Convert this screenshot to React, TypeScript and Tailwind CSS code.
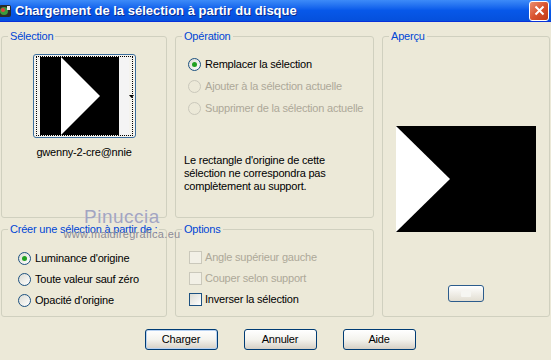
import clsx from "clsx"

interface OptionProps {
  label: string
  checked?: boolean
  disabled?: boolean
  rowClass?: string
}

function Radio({ label, checked, disabled, rowClass }: OptionProps) {
  return (
    <div className={clsx("flex items-center", rowClass)}>
      <span
        className={clsx(
          "flex h-[13px] w-[13px] shrink-0 items-center justify-center rounded-full border",
          disabled
            ? "border-[#CAC8BB] bg-[#ECE9D8]"
            : "border-[#1C5180] bg-linear-to-br from-[#DCDCD4] to-white"
        )}
      >
        {checked && <span className="h-[5px] w-[5px] rounded-full bg-[#21A121]" />}
      </span>
      <span className={clsx("ml-[4px]", disabled ? "text-[#ACA899]" : "text-black")}>
        {label}
      </span>
    </div>
  )
}

function Checkbox({ label, disabled, rowClass }: OptionProps) {
  return (
    <div className={clsx("flex items-center", rowClass)}>
      <span
        className={clsx(
          "h-[13px] w-[13px] shrink-0 border",
          disabled
            ? "border-[#CAC8BB] bg-[#F2F0E6]"
            : "border-[#1C5180] bg-linear-to-br from-[#DCDCD4] to-white"
        )}
      />
      <span className={clsx("ml-[3px]", disabled ? "text-[#ACA899]" : "text-black")}>
        {label}
      </span>
    </div>
  )
}

function GroupBox({
  title,
  className,
  children,
}: {
  title: string
  className?: string
  children?: React.ReactNode
}) {
  return (
    <fieldset className={clsx("min-w-0 rounded-[3px] border border-[#D0D0BF]", className)}>
      <legend className="ml-[6px] whitespace-nowrap px-[2px] leading-[13px] text-[#0046D5]">
        {title}
      </legend>
      {children}
    </fieldset>
  )
}

function XpButton({ label, isDefault }: { label: string; isDefault?: boolean }) {
  return (
    <button
      className={clsx(
        "h-[21px] w-[73px] rounded-[3px] border border-[#003C74] bg-linear-to-b from-white via-[#F4F3EE] to-[#D6D0C5] text-black",
        isDefault && "shadow-[inset_0_0_0_1px_#B8D2F2]"
      )}
    >
      {label}
    </button>
  )
}

export default function App() {
  return (
    <div className="relative h-[360px] w-[551px] overflow-hidden bg-[#ECE9D8] font-['Liberation_Sans',sans-serif] text-[11px] tracking-[-0.2px]">
      {/* title bar */}
      <div className="flex h-[22px] items-center border-b border-[#0831D9] bg-linear-to-b from-[#3D8BF8] via-[#0758E9] to-[#0550DC]">
        <svg width="14" height="14" viewBox="0 0 14 14" className="-ml-[2px] mr-[3px]">
          <rect x="1" y="1" width="12" height="12" rx="2" fill="#2A2A2A" />
          <circle cx="6" cy="7" r="4" fill="#3C9A3C" />
          <circle cx="5" cy="6" r="2" fill="#E04040" />
          <rect x="9" y="2" width="3" height="4" fill="#E8E8E8" />
        </svg>
        <span className="text-[13px] font-bold tracking-[0px] text-white [text-shadow:1px_1px_0_#0A2C8C]">
          Chargement de la sélection à partir du disque
        </span>
        <div className="ml-auto mr-[2px] flex h-[20px] w-[20px] items-center justify-center rounded-[3px] border border-white bg-linear-to-br from-[#E98D6F] via-[#D9532E] to-[#C23A14]">
          <svg width="11" height="11" viewBox="0 0 11 11">
            <path d="M1.5 1.5 L9.5 9.5 M9.5 1.5 L1.5 9.5" stroke="white" strokeWidth="2" />
          </svg>
        </div>
      </div>

      <div className="pt-[8px] pl-[1px]">
        <div className="grid grid-cols-[166px_199px_168px] grid-rows-[188px_94px] gap-x-[8px] gap-y-[5px]">
          <GroupBox title="Sélection">
            <div className="mx-auto mt-[11px] w-[103px] rounded-[3px] border border-[#3C6E9C] bg-[#F4F3EE] px-[2px] py-[1px]">
              <div className="relative border border-dotted border-black px-[3px] py-0">
                <svg width="89" height="78" viewBox="0 0 89 78" className="block">
                  <rect x="0" y="0" width="79" height="78" fill="black" />
                  <rect x="79" y="0" width="10" height="78" fill="#F4F4F4" />
                  <polygon points="21,0 21,78 60,39" fill="white" />
                </svg>
                <svg width="5" height="3" viewBox="0 0 5 3" className="absolute right-[-2px] top-[38px]">
                  <polygon points="0,0 5,0 2.5,3" fill="black" />
                </svg>
              </div>
            </div>
            <div className="mt-[6px] text-center text-black">gwenny-2-cre@nnie</div>
          </GroupBox>

          <GroupBox title="Opération">
            <div className="pl-[12px] pt-[10px]">
              <Radio label="Remplacer la sélection" checked rowClass="h-[22px]" />
              <Radio label="Ajouter à la sélection actuelle" disabled rowClass="h-[22px]" />
              <Radio label="Supprimer de la sélection actuelle" disabled rowClass="h-[22px]" />
            </div>
            <p className="mt-[35px] pl-[8px] leading-[13px] text-black">
              Le rectangle d'origine de cette
              <br />
              sélection ne correspondra pas
              <br />
              complètement au support.
            </p>
          </GroupBox>

          <GroupBox title="Aperçu" className="row-span-2">
            <svg width="140" height="106" viewBox="0 0 140 106" className="mx-auto mt-[83px] block">
              <rect x="0" y="0" width="140" height="106" fill="black" />
              <polygon points="0,0 0,106 54,53" fill="white" />
            </svg>
            <div className="mx-auto mt-[53px] flex h-[17px] w-[36px] items-center justify-center rounded-[3px] border border-[#2C5C8C] bg-linear-to-b from-white to-[#E2DED2]">
              <span className="h-[6px] w-[10px] rounded-[1px] bg-[#F6F6F2]" />
            </div>
          </GroupBox>

          <GroupBox title="Créer une sélection à partir de :">
            <div className="pl-[16px] pt-[12px]">
              <Radio label="Luminance d'origine" checked rowClass="h-[21px]" />
              <Radio label="Toute valeur sauf zéro" rowClass="h-[21px]" />
              <Radio label="Opacité d'origine" rowClass="h-[21px]" />
            </div>
          </GroupBox>

          <GroupBox title="Options">
            <div className="pl-[13px] pt-[11px]">
              <Checkbox label="Angle supérieur gauche" disabled rowClass="h-[21px]" />
              <Checkbox label="Couper selon support" disabled rowClass="h-[21px]" />
              <Checkbox label="Inverser la sélection" rowClass="h-[21px]" />
            </div>
          </GroupBox>
        </div>

        <div className="mt-[12px] flex justify-center gap-[26px] pl-[8px]">
          <XpButton label="Charger" isDefault />
          <XpButton label="Annuler" />
          <XpButton label="Aide" />
        </div>
      </div>

      {/* watermark */}
      <div className="pointer-events-none absolute left-[72px] top-[206px] flex w-[100px] flex-col items-center">
        <span className="text-[19px] leading-[22px] tracking-[0.5px] text-[#A3A5BF] [text-shadow:0_0_1px_#E8E8F0]">
          Pinuccia
        </span>
        <span className="text-[11px] leading-[12px] tracking-[0.3px] text-[#8C8C98]">
          www.maldiregrafica.eu
        </span>
      </div>
    </div>
  )
}
